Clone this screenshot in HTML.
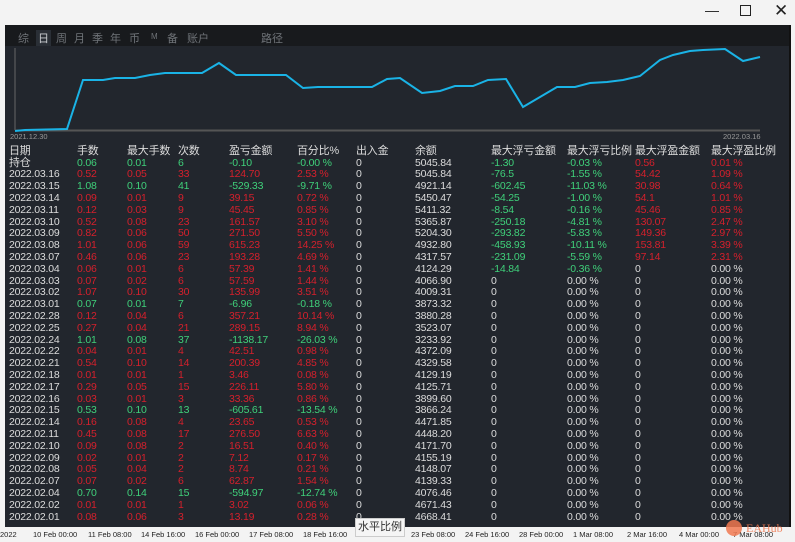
<!DOCTYPE html>
<html><head><meta charset="utf-8"><style>
*{margin:0;padding:0;box-sizing:border-box}
body{width:795px;height:542px;background:#f3f3f3;position:relative;overflow:hidden;font-family:"Liberation Sans","Noto Sans CJK SC",sans-serif}
#p{position:absolute;left:5px;top:25px;width:786px;height:502px;background:#22262d}
#tabs{position:absolute;left:5px;top:25px;width:786px;height:21px;background:#181a1d;color:#6f7378;font-size:11px}
#tabs span{position:absolute;top:5px}
.r{position:absolute;left:0;height:12px;font-size:10.5px;line-height:12px;color:#dcdcdc;white-space:nowrap;letter-spacing:-0.2px}
.r span{position:absolute;top:0}
.g{color:#3fd07a}.d{color:#d5202c}
#bot{position:absolute;left:0;top:527px;width:795px;height:15px;background:#f3f3f3;font-size:7.5px;color:#222}
#bot span{position:absolute;top:3px}
</style></head><body>
<div style="position:absolute;right:0;top:0;width:120px;height:25px;font-size:14px;color:#222">
<span style="position:absolute;left:30px;top:2px">—</span>
<span style="position:absolute;left:65px;top:5px;width:11px;height:11px;border:1.3px solid #222"></span>
<span style="position:absolute;left:99px;top:1px;font-size:17px">✕</span></div>
<div id="p"></div>
<div id="tabs"><span style="left:13px">综</span><span style="left:31px;color:#c9ccd0;background:#2a2f36;padding:0 2px">日</span><span style="left:51px">周</span><span style="left:69px">月</span><span style="left:87px">季</span><span style="left:105px">年</span><span style="left:124px">币</span><span style="left:146px;font-size:8px;top:7px">M</span><span style="left:162px">备</span><span style="left:182px">账户</span><span style="left:256px">路径</span></div>
<div style="position:absolute;left:789px;top:25px;width:2px;height:502px;background:#111"></div>
<svg style="position:absolute;left:0;top:0" width="795" height="542">
<line x1="15" y1="48" x2="15" y2="130" stroke="#666" stroke-width="1"/>
<line x1="15" y1="130.5" x2="760" y2="130.5" stroke="#555" stroke-width="2"/>
<polyline fill="none" stroke="#1ab3e6" stroke-width="2" points="15,131 25,130 67,129 83,80 103,80 115,78 135,78 150,75 165,73 202,73 219,63 236,75 286,75 303,88 318,87 372,87 387,79 400,78 422,93 440,91 455,86 473,86 488,80 506,79 523,107 557,87 575,87 590,83 607,82 623,80 640,76 660,60 673,55 690,51 703,50 725,49 743,61 760,57"/>
<text x="10" y="139" font-size="7.5" fill="#999" font-family="Liberation Sans">2021.12.30</text>
<text x="723" y="139" font-size="7.5" fill="#999" font-family="Liberation Sans">2022.03.16</text>
</svg>
<div id="rows"></div>
<div id="bot">
<span style="left:0">2022</span><span style="left:33px">10 Feb 00:00</span><span style="left:88px">11 Feb 08:00</span><span style="left:141px">14 Feb 16:00</span><span style="left:195px">16 Feb 00:00</span><span style="left:249px">17 Feb 08:00</span><span style="left:303px">18 Feb 16:00</span><span style="left:411px">23 Feb 08:00</span><span style="left:465px">24 Feb 16:00</span><span style="left:519px">28 Feb 00:00</span><span style="left:573px">1 Mar 08:00</span><span style="left:627px">2 Mar 16:00</span><span style="left:679px">4 Mar 00:00</span><span style="left:733px">7 Mar 08:00</span>
</div>
<div style="position:absolute;left:355px;top:518px;width:50px;height:19px;background:#f5f5f5;border:1px solid #ccc;font-size:11px;color:#333;text-align:center;line-height:17px">水平比例</div>
<div style="position:absolute;left:726px;top:520px;width:16px;height:16px;border-radius:8px;background:#f07850;opacity:.85"></div>
<div style="position:absolute;left:746px;top:521px;font-size:12px;color:#f07850;opacity:.85;font-family:'Liberation Serif',serif">EAHub</div>
<script>
var X=[9,77,127,178,229,297,356,415,491,567,635,711];
var H=["日期","手数","最大手数","次数","盈亏金额","百分比%","出入金","余额","最大浮亏金额","最大浮亏比例","最大浮盈金额","最大浮盈比例"];
var D=[
["持仓","g","0.06","0.01","6","-0.10","-0.00 %","5045.84","-1.30","-0.03 %","0.56","0.01 %"],
["2022.03.16","d","0.52","0.05","33","124.70","2.53 %","5045.84","-76.5","-1.55 %","54.42","1.09 %"],
["2022.03.15","g","1.08","0.10","41","-529.33","-9.71 %","4921.14","-602.45","-11.03 %","30.98","0.64 %"],
["2022.03.14","d","0.09","0.01","9","39.15","0.72 %","5450.47","-54.25","-1.00 %","54.1","1.01 %"],
["2022.03.11","d","0.12","0.03","9","45.45","0.85 %","5411.32","-8.54","-0.16 %","45.46","0.85 %"],
["2022.03.10","d","0.52","0.08","23","161.57","3.10 %","5365.87","-250.18","-4.81 %","130.07","2.47 %"],
["2022.03.09","d","0.82","0.06","50","271.50","5.50 %","5204.30","-293.82","-5.83 %","149.36","2.97 %"],
["2022.03.08","d","1.01","0.06","59","615.23","14.25 %","4932.80","-458.93","-10.11 %","153.81","3.39 %"],
["2022.03.07","d","0.46","0.06","23","193.28","4.69 %","4317.57","-231.09","-5.59 %","97.14","2.31 %"],
["2022.03.04","d","0.06","0.01","6","57.39","1.41 %","4124.29","-14.84","-0.36 %","0","0.00 %"],
["2022.03.03","d","0.07","0.02","6","57.59","1.44 %","4066.90"],
["2022.03.02","d","1.07","0.10","30","135.99","3.51 %","4009.31"],
["2022.03.01","g","0.07","0.01","7","-6.96","-0.18 %","3873.32"],
["2022.02.28","d","0.12","0.04","6","357.21","10.14 %","3880.28"],
["2022.02.25","d","0.27","0.04","21","289.15","8.94 %","3523.07"],
["2022.02.24","g","1.01","0.08","37","-1138.17","-26.03 %","3233.92"],
["2022.02.22","d","0.04","0.01","4","42.51","0.98 %","4372.09"],
["2022.02.21","d","0.54","0.10","14","200.39","4.85 %","4329.58"],
["2022.02.18","d","0.01","0.01","1","3.46","0.08 %","4129.19"],
["2022.02.17","d","0.29","0.05","15","226.11","5.80 %","4125.71"],
["2022.02.16","d","0.03","0.01","3","33.36","0.86 %","3899.60"],
["2022.02.15","g","0.53","0.10","13","-605.61","-13.54 %","3866.24"],
["2022.02.14","d","0.16","0.08","4","23.65","0.53 %","4471.85"],
["2022.02.11","d","0.45","0.08","17","276.50","6.63 %","4448.20"],
["2022.02.10","d","0.09","0.08","2","16.51","0.40 %","4171.70"],
["2022.02.09","d","0.02","0.01","2","7.12","0.17 %","4155.19"],
["2022.02.08","d","0.05","0.04","2","8.74","0.21 %","4148.07"],
["2022.02.07","d","0.07","0.02","6","62.87","1.54 %","4139.33"],
["2022.02.04","g","0.70","0.14","15","-594.97","-12.74 %","4076.46"],
["2022.02.02","d","0.01","0.01","1","3.02","0.06 %","4671.43"],
["2022.02.01","d","0.08","0.06","3","13.19","0.28 %","4668.41"]];
var h='<div class="r" style="top:145px">';
H.forEach(function(t,i){h+='<span style="left:'+X[i]+'px;font-size:11px">'+t+'</span>'});
h+='</div>';
D.forEach(function(r,k){
 var y=156.5+k*11.8, c=r[1];
 h+='<div class="r" style="top:'+y.toFixed(1)+'px">';
 h+='<span style="left:9px'+(k==0?';font-size:11px':'')+'">'+r[0]+'</span>';
 for(var j=2;j<7;j++)h+='<span class="'+c+'" style="left:'+X[j-1]+'px">'+r[j]+'</span>';
 h+='<span style="left:356px">0</span><span style="left:415px">'+r[7]+'</span>';
 if(r.length>8){h+='<span class="g" style="left:491px">'+r[8]+'</span><span class="g" style="left:567px">'+r[9]+'</span>';
  var fc=r[10]=="0"?"":"d";
  h+='<span class="'+fc+'" style="left:635px">'+r[10]+'</span><span class="'+fc+'" style="left:711px">'+r[11]+'</span>';}
 else h+='<span style="left:491px">0</span><span style="left:567px">0.00 %</span><span style="left:635px">0</span><span style="left:711px">0.00 %</span>';
 h+='</div>';
});
document.getElementById('rows').innerHTML=h;
</script>
</body></html>
